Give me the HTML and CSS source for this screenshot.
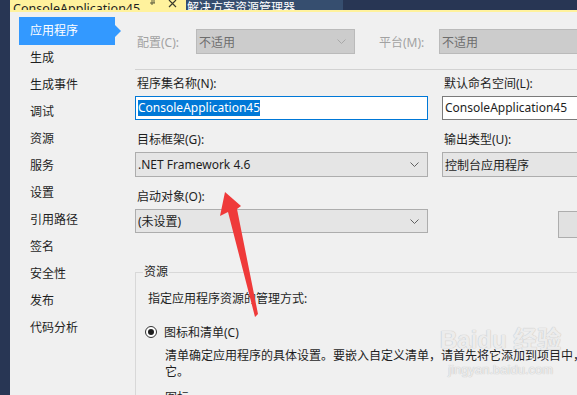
FILE: index.html
```html
<!DOCTYPE html>
<html lang="zh-CN">

<head>
    <meta charset="UTF-8">
    <title>ConsoleApplication45 - 属性</title>
    <link rel="stylesheet" href="styles.css">
</head>

<body>
    <div class="window">
        <div class="edge"></div>

        <div class="frame">
            <div class="tabs">
                <div class="tab tab-active">
                    <span class="tab-title">ConsoleApplication45</span>
                    <svg class="tab-icon" width="28" height="10" viewBox="0 0 28 10">
                        <path d="M3 0v5M1 3h5M5 0v3" stroke="#5a5a3c" stroke-width="1" fill="none" />
                        <path d="M20 0l7 7M27 0l-7 7" stroke="#3c3c2c" stroke-width="1.2" fill="none" />
                    </svg>
                </div>
                <div class="tab tab-dark">
                    <span class="tab-title">解决方案资源管理器</span>
                </div>
            </div>
            <div class="tab-line"></div>

            <div class="main">
                <ul class="nav">
                    <li class="selected">应用程序</li>
                    <li>生成</li>
                    <li>生成事件</li>
                    <li>调试</li>
                    <li>资源</li>
                    <li>服务</li>
                    <li>设置</li>
                    <li>引用路径</li>
                    <li>签名</li>
                    <li>安全性</li>
                    <li>发布</li>
                    <li>代码分析</li>
                </ul>

                <div class="page">
                    <div class="config-row">
                        <span class="config-label">配置(C):</span>
                        <div class="select select-disabled config-select">
                            <span>不适用</span>
                            <svg class="chevron" width="9" height="5" viewBox="0 0 9 5"><path d="M0.5 0.5l4 4 4-4" stroke="#a8a8a8" fill="none" /></svg>
                        </div>
                        <span class="config-label platform-label">平台(M):</span>
                        <div class="select select-disabled platform-select">
                            <span>不适用</span>
                        </div>
                    </div>

                    <div class="separator"></div>

                    <div class="fields">
                        <div class="field">
                            <label>程序集名称(N):</label>
                            <div class="input input-focus"><span class="selection">ConsoleApplication45</span></div>
                        </div>
                        <div class="field">
                            <label>默认命名空间(L):</label>
                            <div class="input">ConsoleApplication45</div>
                        </div>

                        <div class="field">
                            <label>目标框架(G):</label>
                            <div class="select select-tall">
                                <span>.NET Framework 4.6</span>
                                <svg class="chevron" width="9" height="5" viewBox="0 0 9 5"><path d="M0.5 0.5l4 4 4-4" stroke="#606060" fill="none" /></svg>
                            </div>
                        </div>
                        <div class="field">
                            <label>输出类型(U):</label>
                            <div class="select select-tall">
                                <span>控制台应用程序</span>
                            </div>
                        </div>

                        <div class="field">
                            <label>启动对象(O):</label>
                            <div class="select">
                                <span>(未设置)</span>
                                <svg class="chevron" width="9" height="5" viewBox="0 0 9 5"><path d="M0.5 0.5l4 4 4-4" stroke="#606060" fill="none" /></svg>
                            </div>
                        </div>
                        <div class="field field-button">
                            <button class="info-button">程序集信息(I)...</button>
                        </div>
                    </div>

                    <fieldset class="group">
                        <legend>资源</legend>
                        <p class="group-intro">指定应用程序资源的管理方式:</p>
                        <div class="radio-row">
                            <span class="radio"><span class="radio-dot"></span></span>
                            <span>图标和清单(C)</span>
                        </div>
                        <p class="radio-desc">清单确定应用程序的具体设置。要嵌入自定义清单，请首先将它添加到项目中，然后从下面的列表中选择<br>它。</p>
                        <p class="sub-label">图标:</p>
                    </fieldset>
                </div>
            </div>
        </div>
    </div>

    <!-- annotation drawn over the screenshot -->
    <svg class="annot" width="577" height="395" viewBox="0 0 577 395">
        <polygon points="225,192 241,206 237,209 258,314 255,317 228,212 220,216" fill="#ef3a3a" />
    </svg>

    <div class="watermark">
        <span class="wm-logo">Bai<b>du</b> 经验</span>
        <span class="wm-url">jingyan.baidu.com</span>
    </div>
</body>

</html>
```

FILE: styles.css
```css
/* page */
body {
    margin: 0;
    width: 577px;
    height: 395px;
    overflow: hidden;
    position: relative;
    background: #f0f0f0;
    font-family: "Noto Sans", "Noto Sans CJK SC", sans-serif;
    font-size: 12px;
    color: #1e1e1e;
}

.window {
    display: flex;
    height: 395px;
}

.edge {
    width: 10px;
    flex: none;
    background-color: #283654;
}

.frame {
    flex: 1;
    display: flex;
    flex-direction: column;
    min-width: 0;
}

/* document tabs (cut off at the top) */
.tabs {
    display: flex;
    height: 10px;
    overflow: hidden;
    background-color: #283654;
}

.tab {
    height: 10px;
    overflow: hidden;
    display: flex;
    align-items: flex-end;
    flex: none;
}

.tab-title {
    display: block;
    font-size: 12.5px;
    line-height: 16px;
    margin-bottom: -7px;
    white-space: nowrap;
}

.tab-active {
    width: 176px;
    padding-left: 3px;
    box-sizing: border-box;
    background-color: #fff29d;
    color: #1e1e1e;
}

.tab-icon {
    margin-left: 9px;
    align-self: flex-start;
}

.tab-dark {
    width: 157px;
    padding-left: 1px;
    box-sizing: border-box;
    background-color: #364e6f;
    color: #ffffff;
}

.tab-dark .tab-title {
    font-size: 12px;
    margin-bottom: -6px;
}

.tab-line {
    height: 2px;
    background-color: #fff29d;
}

.main {
    flex: 1;
    display: flex;
    min-height: 0;
}

/* left navigation */
.nav {
    list-style: none;
    margin: 0;
    padding: 5px 0 0 9px;
    width: 116px;
    flex: none;
}

.nav li {
    height: 27px;
    line-height: 27px;
    width: 96px;
    padding-left: 11px;
    box-sizing: border-box;
    position: relative;
    white-space: nowrap;
}

.nav li.selected {
    background-color: #3399ff;
    color: #ffffff;
    height: 28px;
    line-height: 28px;
    margin-bottom: -1px;
}

.nav li.selected::after {
    content: "";
    position: absolute;
    right: -6px;
    top: 8px;
    border-style: solid;
    border-width: 6px 0 6px 6px;
    border-color: transparent transparent transparent #3399ff;
}

/* property page */
.page {
    flex: 1;
    min-width: 0;
    padding-top: 17px;
    white-space: nowrap;
}

.config-row {
    display: flex;
    align-items: center;
    height: 25px;
}

.config-label {
    width: 61px;
    padding-left: 2px;
    box-sizing: border-box;
    color: #a2a2a2;
    flex: none;
}

.platform-label {
    margin-left: 22px;
    width: 62px;
}

.select {
    display: flex;
    align-items: center;
    justify-content: space-between;
    height: 24px;
    box-sizing: border-box;
    border: 1px solid #adadad;
    background-color: #e5e5e5;
    padding: 0 8px 0 2px;
    flex: none;
}

.select-tall {
    height: 25px;
}

.select-disabled {
    background-color: #cccccc;
    border-color: #bababa;
    color: #6d6d6d;
    height: 25px;
}

.config-select {
    width: 159px;
}

.platform-select {
    width: 160px;
}

.separator {
    margin-top: 15px;
    border-top: 1px solid #d2d2d2;
}

.fields {
    display: grid;
    grid-template-columns: 293px 160px;
    column-gap: 14px;
    row-gap: 11px;
    margin-top: 5px;
}

.field label {
    display: block;
    line-height: 18px;
    padding-left: 2px;
    margin-bottom: 3px;
}

.field .select {
    margin-top: 1px;
}

.input {
    height: 24px;
    line-height: 22px;
    box-sizing: border-box;
    border: 1px solid #7a7a7a;
    background-color: #ffffff;
    padding-left: 2px;
    overflow: hidden;
}

.input-focus {
    border-color: #0078d7;
}

.selection {
    background-color: #0078d7;
    color: #ffffff;
    display: inline-block;
    line-height: 16px;
}

.field-button {
    padding-top: 23px;
}

.info-button {
    margin-left: 116px;
    width: 100px;
    height: 27px;
    border: 1px solid #adadad;
    background-color: #e1e1e1;
    font: inherit;
    color: #1e1e1e;
    text-align: left;
    padding-left: 24px;
}

/* resources group */
.group {
    margin: 27px 0 0 0;
    padding: 0 0 0 9px;
    border: 1px solid #d8d8d8;
    border-right: none;
    border-bottom: none;
    min-width: 0;
}

.group legend {
    margin-left: -2px;
    padding: 0 1px;
    line-height: 14px;
}

.group p {
    margin: 0;
}

.group-intro {
    margin-top: 11px !important;
    padding-left: 3px;
    line-height: 18px;
}

.radio-row {
    display: flex;
    align-items: center;
    gap: 7px;
    margin-top: 15px;
    height: 18px;
}

.radio {
    width: 12px;
    height: 12px;
    box-sizing: border-box;
    border: 1px solid #333333;
    border-radius: 50%;
    display: flex;
    align-items: center;
    justify-content: center;
    background-color: #ffffff;
}

.radio-dot {
    width: 6px;
    height: 6px;
    border-radius: 50%;
    background-color: #1e1e1e;
}

.radio-desc {
    margin-top: 7px !important;
    padding-left: 20px;
    line-height: 16px;
}

.sub-label {
    margin-top: 9px !important;
    padding-left: 20px;
    line-height: 18px;
}

/* overlays */
.annot {
    position: absolute;
    top: 0;
    left: 0;
    pointer-events: none;
}

.watermark {
    position: absolute;
    left: 440px;
    top: 326px;
    display: flex;
    flex-direction: column;
    align-items: center;
    pointer-events: none;
    color: rgba(255, 255, 255, 0.7);
    text-shadow: 0 0 1px #c4c4c4, 0 0 1px #c4c4c4;
}

.wm-logo {
    font-family: "Liberation Sans", "Noto Sans CJK SC", sans-serif;
    font-size: 24px;
    font-weight: bold;
    line-height: 28px;
}

.wm-url {
    font-family: "Liberation Sans", sans-serif;
    font-size: 13px;
    line-height: 16px;
    margin-top: 8px;
}
```
